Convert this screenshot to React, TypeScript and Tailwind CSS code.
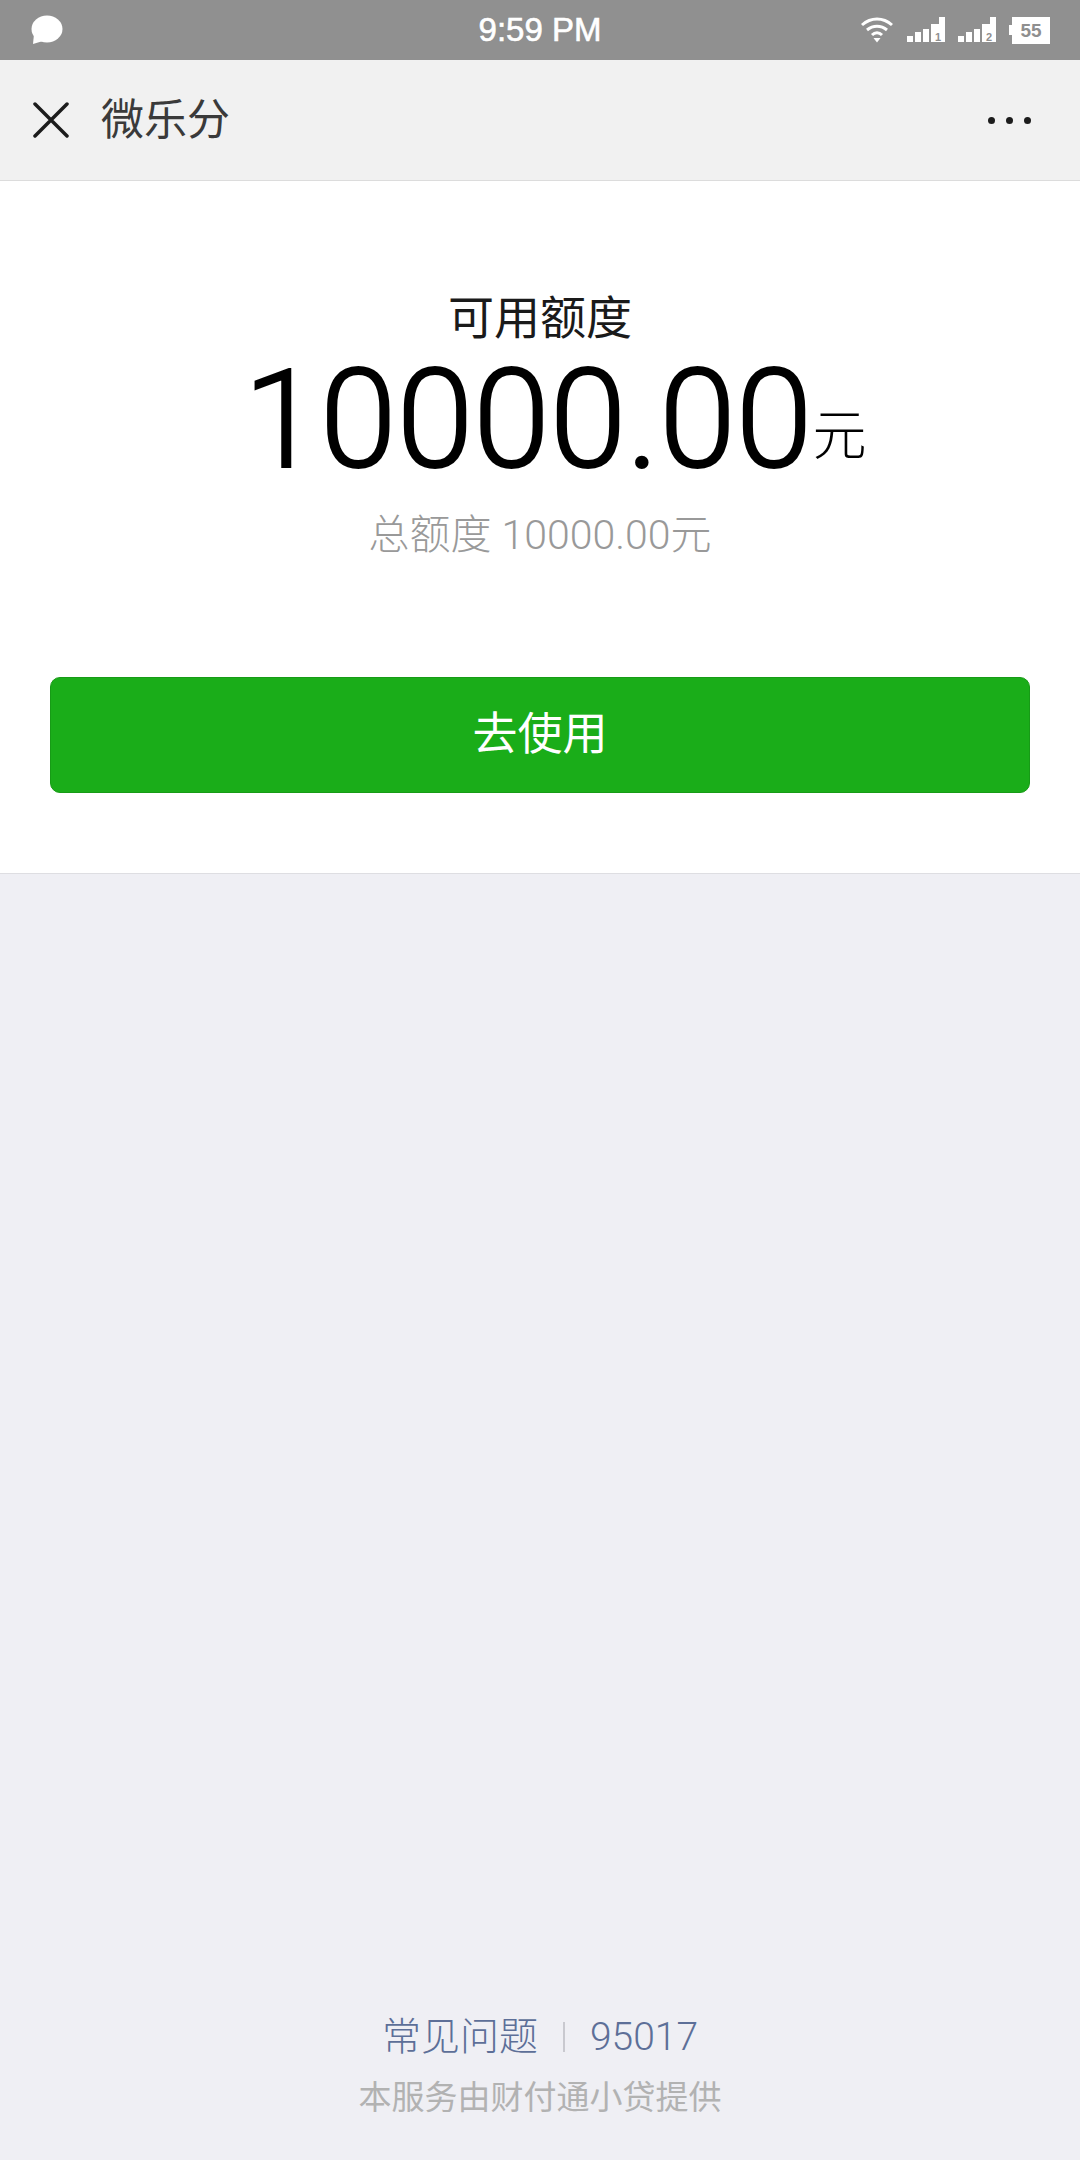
const sans = "font-['Liberation_Sans','Noto_Sans_CJK_SC',sans-serif]";
const light = "font-['Roboto','Noto_Sans_CJK_SC',sans-serif] font-light";

function SignalIcon({ sim }: { sim: string }) {
  return (
    <svg width="40" height="27" viewBox="0 0 40 27" fill="#fff">
      <rect x="0" y="19" width="6" height="6" />
      <rect x="8" y="15" width="6" height="10" />
      <rect x="16" y="12" width="6" height="13" />
      <rect x="24" y="7" width="14" height="18" />
      <rect x="32" y="0" width="6" height="8" />
      <text x="31" y="24" fontSize="11" fontWeight="700" fill="#8f8f8f" textAnchor="middle" fontFamily="Liberation Sans">
        {sim}
      </text>
    </svg>
  );
}

function StatusBar() {
  return (
    <div className="relative flex h-[60px] items-center justify-between bg-[#909090] px-[30px]">
      <svg width="33" height="30" viewBox="0 0 33 30" fill="#fff">
        <ellipse cx="17" cy="14" rx="15.5" ry="13.5" />
        <path d="M4 19 L3 29 L13 26 Z" />
      </svg>
      <span className={`absolute inset-x-0 text-center text-[33px] text-white [-webkit-text-stroke:0.6px_white] ${sans}`}>9:59 PM</span>
      <div className="flex items-center">
        <svg width="34" height="28" viewBox="0 0 34 28" fill="none" stroke="#fff" strokeWidth="3" className="mr-[13px]">
          <path d="M2 9 C11 1 23 1 32 9" />
          <path d="M7 14 C13 9 21 9 27 14" />
          <path d="M12 19 C15 16 19 16 22 19" />
          <path d="M13.5 22 L20.5 22 L17 26.5 Z" fill="#fff" stroke="none" />
        </svg>
        <SignalIcon sim="1" />
        <div className="w-[11px]" />
        <SignalIcon sim="2" />
        <div className="relative ml-[14px] flex h-[27px] w-[38px] items-center justify-center bg-white">
          <div className="absolute left-[-3px] top-[8px] h-[10px] w-[3px] bg-white" />
          <span className={`text-[19px] font-bold leading-none text-[#8f8f8f] ${sans}`}>55</span>
        </div>
      </div>
    </div>
  );
}

function NavBar() {
  return (
    <div className="flex h-[121px] items-center border-b border-[#dcdcdc] bg-[#f1f1f1] pl-[33px] pr-[49px]">
      <svg width="36" height="36" viewBox="0 0 36 36" stroke="#1c1c1c" strokeWidth="3.5" strokeLinecap="round">
        <path d="M2 2 L34 34 M34 2 L2 34" />
      </svg>
      <span className={`ml-[32px] text-[43px] leading-none text-[#3a3a3a] ${sans}`}>微乐分</span>
      <div className="ml-auto flex gap-[11px]">
        <div className="h-[7px] w-[7px] rounded-full bg-[#1c1c1c]" />
        <div className="h-[7px] w-[7px] rounded-full bg-[#1c1c1c]" />
        <div className="h-[7px] w-[7px] rounded-full bg-[#1c1c1c]" />
      </div>
    </div>
  );
}

export default function App() {
  return (
    <main className={`flex h-[2160px] w-[1080px] flex-col bg-[#efeff4] ${sans}`}>
      <StatusBar />
      <NavBar />
      <section className="flex h-[693px] flex-col items-center border-b border-[#dedee2] bg-white px-[50px] pt-[111px]">
        <div className="text-[46px] leading-[52px] text-[#1a1a1a]">可用额度</div>
        <div className={`mt-[11px] flex items-end whitespace-nowrap pl-[30px] text-black ${light}`}>
          <span className="block text-[138px] leading-[130px] [-webkit-text-stroke:2px_black]">10000.00</span>
          <span className="mb-[21px] block text-[54px] leading-none">元</span>
        </div>
        <div className={`mt-[27px] text-[41px] leading-[46px] text-[#999999] ${light}`}>总额度 10000.00元</div>
        <button className="mt-[119px] h-[116px] w-full rounded-[10px] border border-[#179b16] bg-[#1aad19] text-[45px] text-white">
          去使用
        </button>
      </section>
      <footer className="mt-auto flex flex-col items-center pb-[42px]">
        <div className={`flex items-center text-[39px] leading-[46px] text-[#5d6f98] ${light}`}>
          <span>常见问题</span>
          <span className="mx-[25px] h-[30px] w-[2px] bg-[#c9c9cf]" />
          <span>95017</span>
        </div>
        <div className="mt-[18px] text-[33px] leading-[40px] text-[#b2b2b2]">本服务由财付通小贷提供</div>
      </footer>
    </main>
  );
}
